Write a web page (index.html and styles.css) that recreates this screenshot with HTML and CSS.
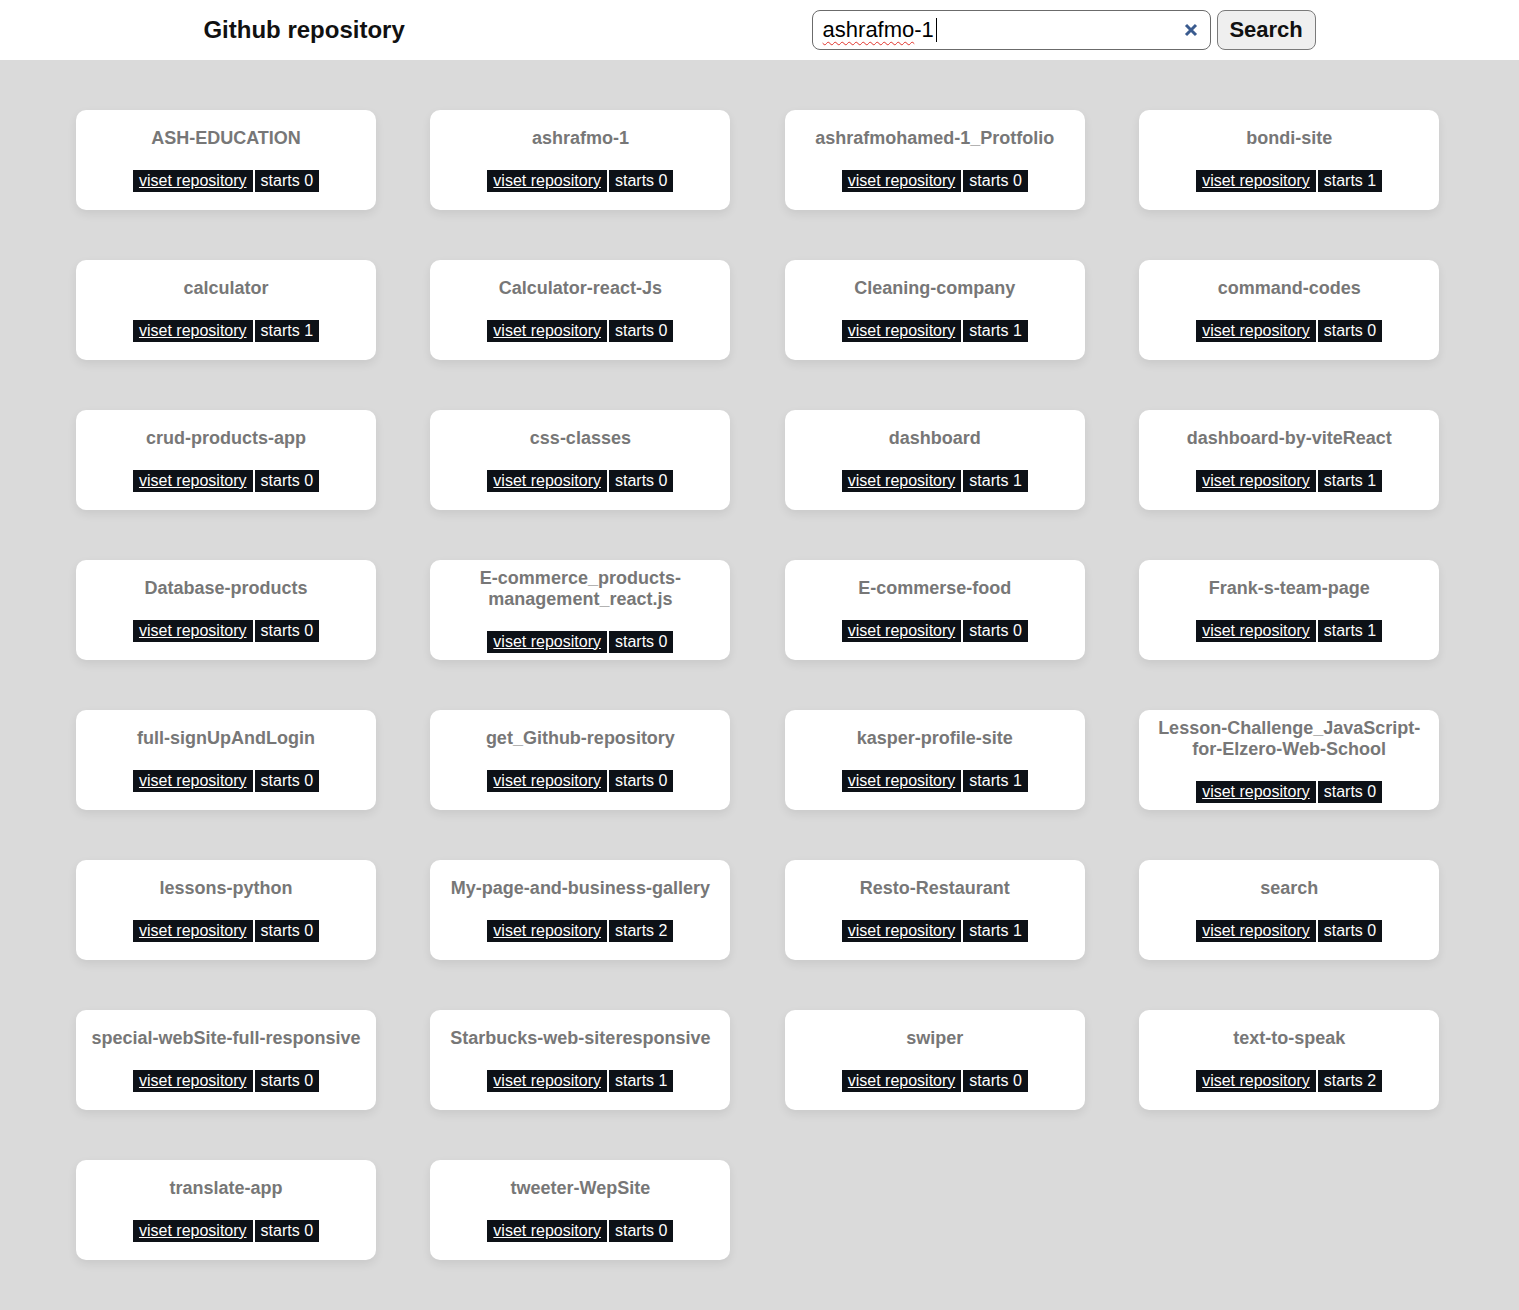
FILE: index.html
```html
<!DOCTYPE html>
<html lang="en">
<head>
<meta charset="utf-8">
<title>Github repository</title>
<link rel="stylesheet" href="styles.css">
</head>
<body>
<header class="topbar">
  <h2 class="brand">Github repository</h2>
  <form class="search-form" onsubmit="return false">
    <div class="field">
      <span class="typed"><span class="misspelt">ashrafmo</span>-1</span><span class="caret"></span>
      <svg class="clear" width="14" height="14" viewBox="0 0 14 14" aria-hidden="true"><path d="M2 2 L12 12 M12 2 L2 12" stroke="#3a5b8f" stroke-width="3" stroke-linecap="butt"/></svg>
    </div>
    <button class="search-btn" type="button">Search</button>
  </form>
</header>
<main class="repos">
  <div class="card"><h3 class="name">ASH-EDUCATION</h3><div class="meta"><a class="visit" href="#">viset repository</a><span class="stars">starts 0</span></div></div>
  <div class="card"><h3 class="name">ashrafmo-1</h3><div class="meta"><a class="visit" href="#">viset repository</a><span class="stars">starts 0</span></div></div>
  <div class="card"><h3 class="name">ashrafmohamed-1_Protfolio</h3><div class="meta"><a class="visit" href="#">viset repository</a><span class="stars">starts 0</span></div></div>
  <div class="card"><h3 class="name">bondi-site</h3><div class="meta"><a class="visit" href="#">viset repository</a><span class="stars">starts 1</span></div></div>

  <div class="card"><h3 class="name">calculator</h3><div class="meta"><a class="visit" href="#">viset repository</a><span class="stars">starts 1</span></div></div>
  <div class="card"><h3 class="name">Calculator-react-Js</h3><div class="meta"><a class="visit" href="#">viset repository</a><span class="stars">starts 0</span></div></div>
  <div class="card"><h3 class="name">Cleaning-company</h3><div class="meta"><a class="visit" href="#">viset repository</a><span class="stars">starts 1</span></div></div>
  <div class="card"><h3 class="name">command-codes</h3><div class="meta"><a class="visit" href="#">viset repository</a><span class="stars">starts 0</span></div></div>

  <div class="card"><h3 class="name">crud-products-app</h3><div class="meta"><a class="visit" href="#">viset repository</a><span class="stars">starts 0</span></div></div>
  <div class="card"><h3 class="name">css-classes</h3><div class="meta"><a class="visit" href="#">viset repository</a><span class="stars">starts 0</span></div></div>
  <div class="card"><h3 class="name">dashboard</h3><div class="meta"><a class="visit" href="#">viset repository</a><span class="stars">starts 1</span></div></div>
  <div class="card"><h3 class="name">dashboard-by-viteReact</h3><div class="meta"><a class="visit" href="#">viset repository</a><span class="stars">starts 1</span></div></div>

  <div class="card"><h3 class="name">Database-products</h3><div class="meta"><a class="visit" href="#">viset repository</a><span class="stars">starts 0</span></div></div>
  <div class="card"><h3 class="name">E-commerce_products-management_react.js</h3><div class="meta"><a class="visit" href="#">viset repository</a><span class="stars">starts 0</span></div></div>
  <div class="card"><h3 class="name">E-commerse-food</h3><div class="meta"><a class="visit" href="#">viset repository</a><span class="stars">starts 0</span></div></div>
  <div class="card"><h3 class="name">Frank-s-team-page</h3><div class="meta"><a class="visit" href="#">viset repository</a><span class="stars">starts 1</span></div></div>

  <div class="card"><h3 class="name">full-signUpAndLogin</h3><div class="meta"><a class="visit" href="#">viset repository</a><span class="stars">starts 0</span></div></div>
  <div class="card"><h3 class="name">get_Github-repository</h3><div class="meta"><a class="visit" href="#">viset repository</a><span class="stars">starts 0</span></div></div>
  <div class="card"><h3 class="name">kasper-profile-site</h3><div class="meta"><a class="visit" href="#">viset repository</a><span class="stars">starts 1</span></div></div>
  <div class="card"><h3 class="name">Lesson-Challenge_JavaScript-for-Elzero-Web-School</h3><div class="meta"><a class="visit" href="#">viset repository</a><span class="stars">starts 0</span></div></div>

  <div class="card"><h3 class="name">lessons-python</h3><div class="meta"><a class="visit" href="#">viset repository</a><span class="stars">starts 0</span></div></div>
  <div class="card"><h3 class="name">My-page-and-business-gallery</h3><div class="meta"><a class="visit" href="#">viset repository</a><span class="stars">starts 2</span></div></div>
  <div class="card"><h3 class="name">Resto-Restaurant</h3><div class="meta"><a class="visit" href="#">viset repository</a><span class="stars">starts 1</span></div></div>
  <div class="card"><h3 class="name">search</h3><div class="meta"><a class="visit" href="#">viset repository</a><span class="stars">starts 0</span></div></div>

  <div class="card"><h3 class="name">special-webSite-full-responsive</h3><div class="meta"><a class="visit" href="#">viset repository</a><span class="stars">starts 0</span></div></div>
  <div class="card"><h3 class="name">Starbucks-web-siteresponsive</h3><div class="meta"><a class="visit" href="#">viset repository</a><span class="stars">starts 1</span></div></div>
  <div class="card"><h3 class="name">swiper</h3><div class="meta"><a class="visit" href="#">viset repository</a><span class="stars">starts 0</span></div></div>
  <div class="card"><h3 class="name">text-to-speak</h3><div class="meta"><a class="visit" href="#">viset repository</a><span class="stars">starts 2</span></div></div>

  <div class="card"><h3 class="name">translate-app</h3><div class="meta"><a class="visit" href="#">viset repository</a><span class="stars">starts 0</span></div></div>
  <div class="card"><h3 class="name">tweeter-WepSite</h3><div class="meta"><a class="visit" href="#">viset repository</a><span class="stars">starts 0</span></div></div>
</main>
</body>
</html>
```
FILE: styles.css
```css
* { box-sizing: border-box; }

body {
  margin: 0;
  font-family: "Liberation Sans", Arial, sans-serif;
  background: #dadada;
}

.topbar {
  height: 60px;
  background: #ffffff;
  display: flex;
  align-items: center;
  justify-content: space-around;
}

.brand {
  margin: 0;
  font-size: 24px;
  font-weight: 700;
  color: #111;
  line-height: 28px;
}

.search-form {
  display: flex;
  align-items: center;
  gap: 6px;
}

.field {
  width: 399px;
  height: 40px;
  border: 1px solid #6b6b6b;
  border-radius: 8px;
  background: #fff;
  display: flex;
  align-items: center;
  padding: 0 12px 0 10px;
  font-size: 22px;
  color: #000;
}

.typed { white-space: nowrap; }

.misspelt {
  text-decoration: underline wavy #e0332b;
  text-decoration-thickness: 1px;
  text-underline-offset: 4px;
}

.caret {
  width: 1px;
  height: 24px;
  background: #000;
  margin-left: 2px;
}

.clear { margin-left: auto; }

.search-btn {
  height: 40px;
  width: 99px;
  border: 1px solid #7a7a7a;
  border-radius: 8px;
  background: #efefef;
  font-family: "Liberation Sans", Arial, sans-serif;
  font-size: 22px;
  font-weight: 700;
  color: #111;
  padding: 0;
}

.repos {
  display: grid;
  grid-template-columns: repeat(4, 300px);
  column-gap: 54.4px;
  row-gap: 50px;
  padding: 50px 0 50px 76px;
}

.card {
  height: 100px;
  background: #fff;
  border-radius: 10px;
  box-shadow: 0 4px 10px rgba(0, 0, 0, 0.08);
  display: flex;
  flex-direction: column;
  align-items: center;
  justify-content: center;
  gap: 21px;
  padding: 0 10px;
  text-align: center;
}

.name {
  margin: 0;
  font-size: 18px;
  font-weight: 700;
  line-height: 21px;
  color: #777;
}

.meta {
  display: flex;
  gap: 2px;
}

.visit,
.stars {
  background: #0d1117;
  color: #fff;
  font-size: 16px;
  line-height: 18px;
  padding: 2px 6px;
}

.visit { text-decoration: underline; }
```
